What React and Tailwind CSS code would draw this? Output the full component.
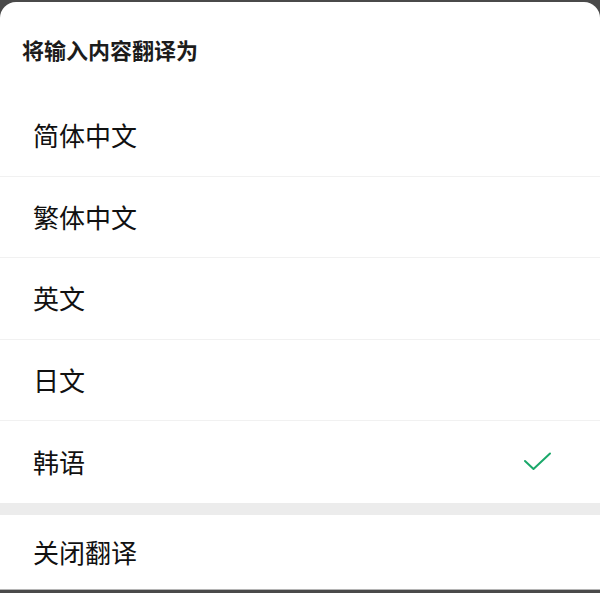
import React from 'react';

const languages = ['简体中文', '繁体中文', '英文', '日文', '韩语'];

const font = { fontFamily: '"Noto Sans CJK SC", "Noto Sans", sans-serif' };

const CheckIcon = () => (
  <svg width="30" height="20" viewBox="0 0 30 20" fill="none" className="mr-[47px]">
    <path d="M2 9 L10.5 17 L27 1.5" stroke="#1aa86a" strokeWidth="2" strokeLinecap="round" strokeLinejoin="round" />
  </svg>
);

const App = () => {
  const selected = '韩语';

  return (
    <div className="w-[600px] h-[593px] bg-[#4a4a4a] pt-[2px] overflow-hidden" style={font}>
      <div className="bg-white rounded-t-[16px] h-[587px] flex flex-col">
        {/* Title */}
        <div className="h-[93px] pl-[22px] pt-[33px]">
          <h1 className="text-[22px] leading-[28px] font-semibold text-[#1c1c1c]">将输入内容翻译为</h1>
        </div>

        {/* Options */}
        {languages.map((lang, i) => (
          <div
            key={lang}
            className={`h-[81.6px] flex items-center justify-between pl-[33px] ${i < languages.length - 1 ? 'border-b border-[#f1f1f1]' : ''}`}
          >
            <span className="text-[26px] leading-none text-[#111]">{lang}</span>
            {lang === selected && <CheckIcon />}
          </div>
        ))}

        {/* Divider */}
        <div className="h-[12px] bg-[#ececec]" />

        {/* Close */}
        <div className="flex-1 flex items-center pl-[33px]">
          <span className="text-[26px] leading-none text-[#111]">关闭翻译</span>
        </div>
      </div>
      <div className="h-[1px] bg-[#b5b5b5]" />
    </div>
  );
};

export default App;
